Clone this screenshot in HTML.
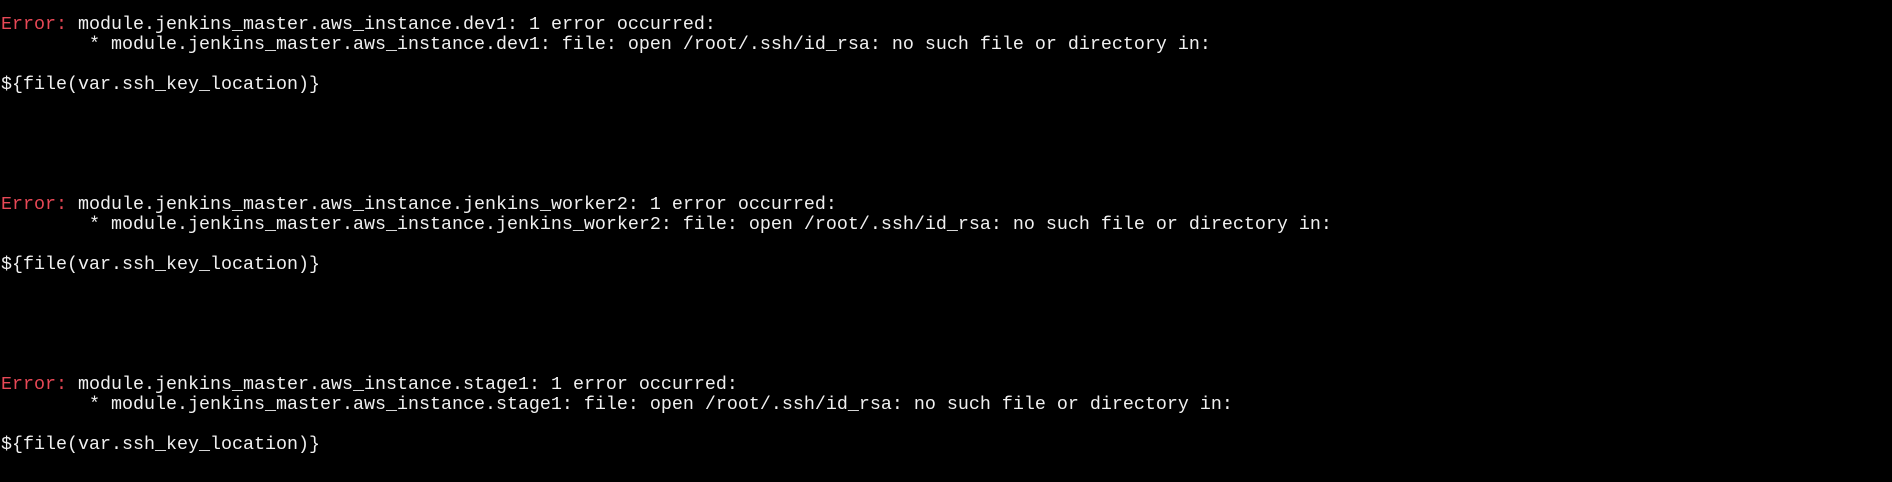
<!DOCTYPE html>
<html><head><meta charset="utf-8"><style>
html,body{margin:0;padding:0;background:#000;width:1892px;height:482px;overflow:hidden}
pre{margin:0;padding:15px 0 0 1px;font-family:"Liberation Mono",monospace;font-size:18.33px;line-height:20px;color:#f0f0f0;white-space:pre}
.r{color:#e74856}
</style></head><body><pre><span class="r">Error:</span> module.jenkins_master.aws_instance.dev1: 1 error occurred:
        * module.jenkins_master.aws_instance.dev1: file: open /root/.ssh/id_rsa: no such file or directory in:

${file(var.ssh_key_location)}





<span class="r">Error:</span> module.jenkins_master.aws_instance.jenkins_worker2: 1 error occurred:
        * module.jenkins_master.aws_instance.jenkins_worker2: file: open /root/.ssh/id_rsa: no such file or directory in:

${file(var.ssh_key_location)}





<span class="r">Error:</span> module.jenkins_master.aws_instance.stage1: 1 error occurred:
        * module.jenkins_master.aws_instance.stage1: file: open /root/.ssh/id_rsa: no such file or directory in:

${file(var.ssh_key_location)}
</pre></body></html>
